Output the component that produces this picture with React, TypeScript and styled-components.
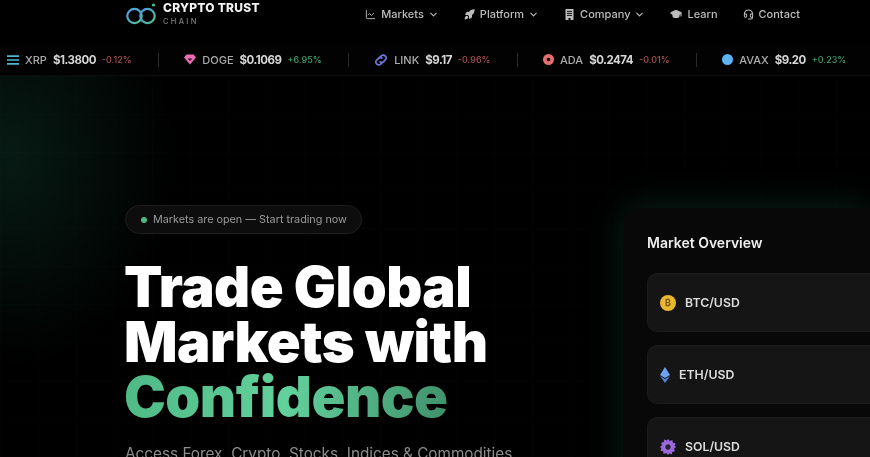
import React from 'react';
import styled, { createGlobalStyle } from 'styled-components';
import { LineChart, ChevronDown, Rocket, GraduationCap, Headset } from 'lucide-react';

const Global = createGlobalStyle`
  html, body { margin: 0; padding: 0; background: #000; }
  body { font-family: Inter, "Liberation Sans", sans-serif; }
`;

const ticker = [
  { icon: 'xrp', name: 'XRP', price: '$1.3800', change: '-0.12%', up: false },
  { icon: 'doge', name: 'DOGE', price: '$0.1069', change: '+6.95%', up: true },
  { icon: 'link', name: 'LINK', price: '$9.17', change: '-0.96%', up: false },
  { icon: 'ada', name: 'ADA', price: '$0.2474', change: '-0.01%', up: false },
  { icon: 'avax', name: 'AVAX', price: '$9.20', change: '+0.23%', up: true },
  { icon: 'bnb', name: '', price: '', change: '', up: true },
];

const TickerIcon = ({ kind }: { kind: string }) => {
  switch (kind) {
    case 'xrp':
      return (
        <svg width="12" height="10" viewBox="0 0 12 10" fill="none" stroke="#4fb6cf" strokeWidth="1.7">
          <path d="M0 1.2h12M0 5h12M0 8.8h12" />
        </svg>
      );
    case 'doge':
      return (
        <svg width="12" height="11" viewBox="0 0 12 11">
          <path d="M2.5 0.5h7L12 3.6 6 10.5 0 3.6z" fill="#ec6fb4" />
          <path d="M3.5 4.6h5L6 7z" fill="#3a1129" />
        </svg>
      );
    case 'link':
      return (
        <svg width="14" height="12" viewBox="0 0 14 12" fill="none" stroke="#6f77d8" strokeWidth="1.7" strokeLinecap="round">
          <path d="M6 3.2l1.4-1.4a2.5 2.5 0 0 1 3.6 0l.4.4a2.5 2.5 0 0 1 0 3.6L9.6 7.6a2.5 2.5 0 0 1-3.4.2" />
          <path d="M8 8.8l-1.4 1.4a2.5 2.5 0 0 1-3.6 0l-.4-.4a2.5 2.5 0 0 1 0-3.6l1.8-1.8a2.5 2.5 0 0 1 3.4-.2" />
        </svg>
      );
    case 'ada':
      return (
        <svg width="11" height="11" viewBox="0 0 11 11">
          <circle cx="5.5" cy="5.5" r="5.5" fill="#e66f70" />
          <circle cx="5.5" cy="5.5" r="1.8" fill="#1b0606" />
        </svg>
      );
    case 'avax':
      return (
        <svg width="11" height="11" viewBox="0 0 11 11">
          <circle cx="5.5" cy="5.5" r="5.5" fill="#5cb4f2" />
        </svg>
      );
    default:
      return (
        <svg width="11" height="11" viewBox="0 0 11 11">
          <circle cx="5.5" cy="5.5" r="5.5" fill="#a88c2a" />
        </svg>
      );
  }
};

const BuildingIcon = () => (
  <svg width="11" height="11" viewBox="0 0 11 11">
    <path d="M1.5 0h8v11H6.5V9h-2v2h-3z" fill="#bdbdbd" />
    <path d="M3 2.4h5M3 4.4h5M3 6.4h5" stroke="#000" strokeWidth="0.9" />
  </svg>
);

const App: React.FC = () => {
  return (
    <S.Page>
      <Global />
      <S.Header>
        <S.Brand>
          <svg width="32" height="24" viewBox="0 0 32 24" fill="none">
            <defs>
              <linearGradient id="logoG" x1="0" y1="0" x2="1" y2="1">
                <stop offset="0" stopColor="#4f9be8" />
                <stop offset="1" stopColor="#4fc08d" />
              </linearGradient>
            </defs>
            <circle cx="8.5" cy="14" r="7.2" stroke="url(#logoG)" strokeWidth="2.2" />
            <circle cx="21.5" cy="14" r="7.2" stroke="url(#logoG)" strokeWidth="2.2" />
            <circle cx="27.5" cy="3" r="1.6" fill="#4fc08d" />
          </svg>
          <S.BrandText>
            <S.BrandName>CRYPTO TRUST</S.BrandName>
            <S.BrandSub>CHAIN</S.BrandSub>
          </S.BrandText>
        </S.Brand>
        <S.Nav>
          <S.NavItem><LineChart size={11} strokeWidth={2} />Markets<S.Caret><ChevronDown size={11} strokeWidth={2.4} /></S.Caret></S.NavItem>
          <S.NavItem><Rocket size={11} strokeWidth={2.4} fill="#bdbdbd" />Platform<S.Caret><ChevronDown size={11} strokeWidth={2.4} /></S.Caret></S.NavItem>
          <S.NavItem><BuildingIcon />Company<S.Caret><ChevronDown size={11} strokeWidth={2.4} /></S.Caret></S.NavItem>
          <S.NavItem><GraduationCap size={12} strokeWidth={2.2} fill="#bdbdbd" />Learn</S.NavItem>
          <S.NavItem><Headset size={11} strokeWidth={2.2} />Contact</S.NavItem>
        </S.Nav>
      </S.Header>

      <S.Ticker>
        {ticker.map((t) => (
          <S.TickerItem key={t.icon}>
            <TickerIcon kind={t.icon} />
            <S.TickerName>{t.name}</S.TickerName>
            <S.TickerPrice>{t.price}</S.TickerPrice>
            <S.TickerChange $up={t.up}>{t.change}</S.TickerChange>
          </S.TickerItem>
        ))}
      </S.Ticker>

      <S.Hero>
        <S.Copy>
          <S.Pill><S.Dot />Markets are open — Start trading now</S.Pill>
          <S.Title>
            Trade Global<br />Markets with<br /><S.Accent>Confidence</S.Accent>
          </S.Title>
          <S.Lead>Access Forex, Crypto, Stocks, Indices &amp; Commodities</S.Lead>
        </S.Copy>
        <S.Card>
          <S.CardTitle>Market Overview</S.CardTitle>
          <S.Row>
            <svg width="16" height="16" viewBox="0 0 16 16">
              <circle cx="8" cy="8" r="8" fill="#e9b82f" />
              <text x="8" y="11" textAnchor="middle" fontSize="9" fontWeight="700" fill="#7a5a0a" fontFamily="Inter">₿</text>
            </svg>
            <S.Pair>BTC/USD</S.Pair>
          </S.Row>
          <S.Row>
            <svg width="10" height="16" viewBox="0 0 10 16">
              <path d="M5 0l5 8-5 3-5-3z" fill="#6ea3ef" />
              <path d="M5 12l5-3-5 7-5-7z" fill="#4f83d6" />
            </svg>
            <S.Pair>ETH/USD</S.Pair>
          </S.Row>
          <S.Row>
            <svg width="16" height="16" viewBox="0 0 16 16">
              <path fill="#9a66dc" d="M8 0l1.8 2 2.5-.9.6 2.6 2.6.6-.9 2.5L16 8l-2 1.8.9 2.5-2.6.6-.6 2.6-2.5-.9L8 16l-1.8-2-2.5.9-.6-2.6-2.6-.6.9-2.5L0 8l2-1.8-.9-2.5 2.6-.6.6-2.6 2.5.9z" />
              <circle cx="8" cy="8" r="3.4" fill="#2a1c3e" stroke="#b48cec" strokeWidth="1" />
            </svg>
            <S.Pair>SOL/USD</S.Pair>
          </S.Row>
        </S.Card>
      </S.Hero>
    </S.Page>
  );
};

const S = {
  Page: styled.div`
    width: 870px;
    height: 457px;
    overflow: hidden;
    display: flex;
    flex-direction: column;
    background: #000;
    filter: blur(0.45px);
  `,
  Header: styled.header`
    flex: none;
    box-sizing: border-box;
    display: flex;
    align-items: center;
    height: 44px;
    padding: 0 70px 16px 125px;
    background: #000;
  `,
  Brand: styled.div`
    display: flex;
    align-items: center;
    gap: 5px;
    margin-left: 1px;
  `,
  BrandText: styled.div`
    display: flex;
    flex-direction: column;
    margin-top: -1px;
  `,
  BrandName: styled.span`
    font-size: 12px;
    line-height: 16px;
    font-weight: 800;
    color: #f2f2f2;
    letter-spacing: 0.25px;
  `,
  BrandSub: styled.span`
    font-size: 7.5px;
    line-height: 11px;
    font-weight: 500;
    color: #7d7d7d;
    letter-spacing: 2.3px;
  `,
  Nav: styled.nav`
    margin-left: auto;
    display: flex;
    align-items: center;
    gap: 25px;
  `,
  NavItem: styled.div`
    display: flex;
    align-items: center;
    gap: 5px;
    font-size: 11px;
    font-weight: 500;
    color: #bdbdbd;
    white-space: nowrap;
  `,
  Caret: styled.span`
    display: flex;
    margin-left: -1px;
  `,
  Ticker: styled.div`
    flex: none;
    box-sizing: border-box;
    display: flex;
    align-items: center;
    height: 32px;
    background: #020202;
    border-bottom: 1px solid #0c0c0c;
    overflow: hidden;
  `,
  TickerItem: styled.div`
    flex: none;
    display: flex;
    align-items: center;
    gap: 6px;
    padding: 0 26px 0 7px;
    margin-right: 17.5px;
    height: 14px;
    border-right: 1px solid #2a2a2a;
    white-space: nowrap;
    &:not(:first-child) { padding-left: 8px; }
  `,
  TickerName: styled.span`
    font-size: 11px;
    font-weight: 500;
    color: #ababab;
  `,
  TickerPrice: styled.span`
    font-size: 11.5px;
    font-weight: 700;
    letter-spacing: -0.5px;
    color: #d6d6d6;
  `,
  TickerChange: styled.span<{ $up: boolean }>`
    font-size: 9px;
    font-weight: 500;
    color: ${(p) => (p.$up ? '#3f9d6b' : '#a85050')};
  `,
  Hero: styled.section`
    flex: 1;
    display: flex;
    justify-content: space-between;
    align-items: flex-start;
    min-height: 0;
    padding: 129px 0 0 125px;
    background:
      repeating-linear-gradient(90deg, rgba(255, 255, 255, 0.007) 0 1px, transparent 1px 38px),
      repeating-linear-gradient(0deg, rgba(255, 255, 255, 0.007) 0 1px, transparent 1px 38px),
      radial-gradient(ellipse 165px 210px at 10px 80px, rgba(28, 110, 78, 0.24), transparent 100%),
      #000;
  `,
  Copy: styled.div`
    display: flex;
    flex-direction: column;
    align-items: flex-start;
  `,
  Pill: styled.div`
    display: flex;
    align-items: center;
    gap: 6px;
    box-sizing: border-box;
    height: 29px;
    padding: 0 14px 0 15px;
    border: 1px solid #1e1e1e;
    border-radius: 15px;
    background: #0c0d0c;
    font-size: 10.8px;
    color: #9a9a9a;
    white-space: nowrap;
  `,
  Dot: styled.span`
    width: 6px;
    height: 6px;
    border-radius: 50%;
    background: #4fb985;
  `,
  Title: styled.h1`
    margin: 26px 0 0 -1px;
    font-size: 56px;
    line-height: 55px;
    font-weight: 900;
    letter-spacing: -0.5px;
    color: #fff;
    white-space: nowrap;
  `,
  Accent: styled.span`
    background: linear-gradient(100deg, #4fb985 0%, #62d19c 50%, #3f8f6a 100%);
    -webkit-background-clip: text;
    background-clip: text;
    color: transparent;
  `,
  Lead: styled.p`
    margin: 18px 0 0;
    font-size: 15.3px;
    line-height: 22px;
    color: #8c8c8c;
    white-space: nowrap;
  `,
  Card: styled.div`
    box-sizing: border-box;
    flex: none;
    width: 247px;
    height: 300px;
    margin-top: 3px;
    padding: 24px 0 0 24px;
    border-radius: 16px 0 0 0;
    background: #080808;
    box-shadow: 0 -2px 36px rgba(32, 140, 100, 0.24);
    display: flex;
    flex-direction: column;
    gap: 13px;
  `,
  CardTitle: styled.h2`
    margin: 0 0 6px;
    font-size: 14px;
    line-height: 22px;
    font-weight: 600;
    color: #ededed;
  `,
  Row: styled.div`
    flex: none;
    box-sizing: border-box;
    height: 59px;
    width: 260px;
    display: flex;
    align-items: center;
    gap: 9px;
    padding-left: 12px;
    border: 1px solid #1b1b1b;
    border-radius: 10px 0 0 10px;
    background: #151515;
  `,
  Pair: styled.span`
    font-size: 12.3px;
    font-weight: 600;
    color: #dcdcdc;
  `,
};

export default App;
